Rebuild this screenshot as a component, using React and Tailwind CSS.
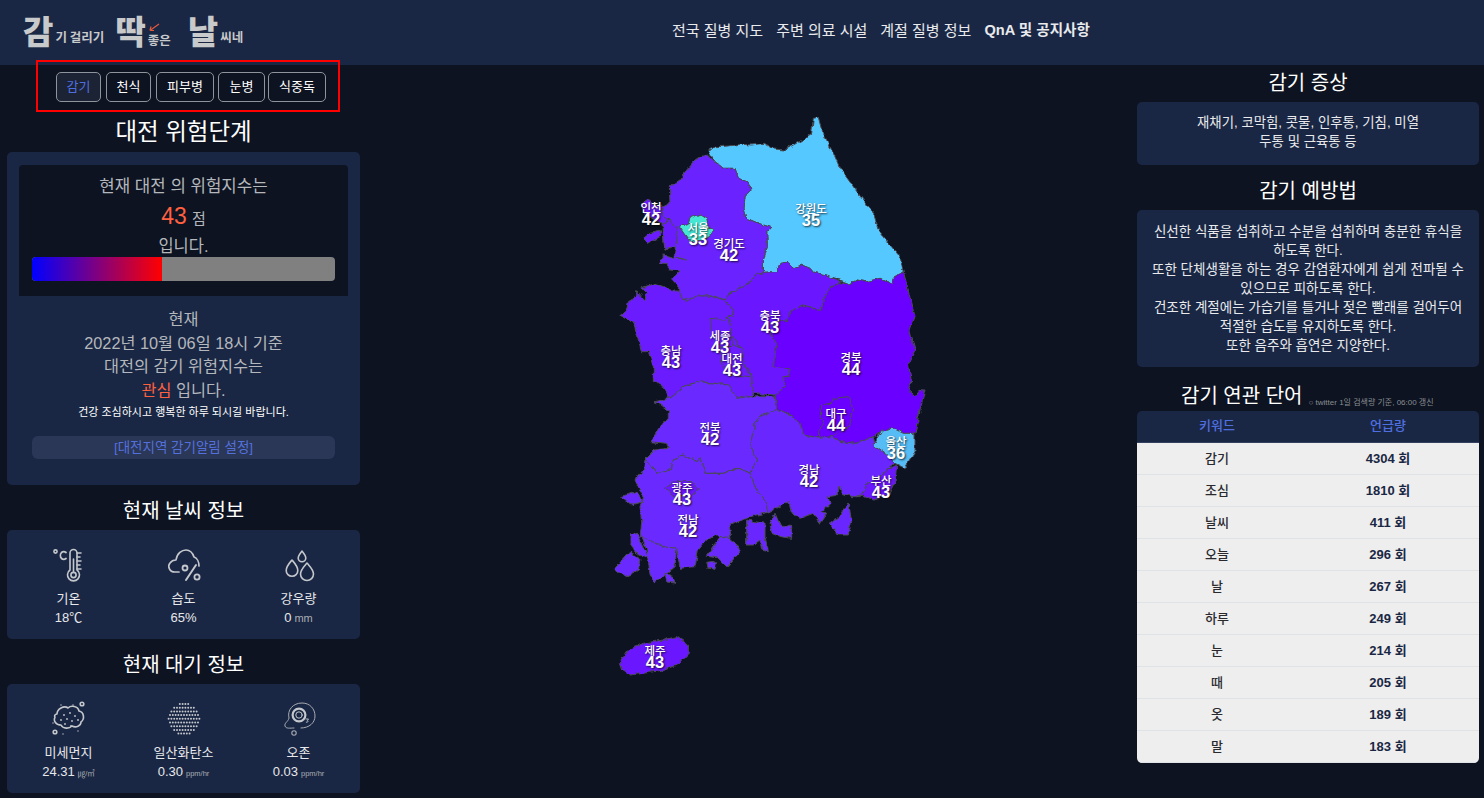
const FONT = "font-['Liberation_Sans','Noto_Sans_CJK_KR',sans-serif]";

const REGIONS = [
  { fill: "#55c8ff", pts: "325,150 350,140 385,138 420,133 455,135 490,130 520,147 550,150 580,135 610,118 635,100 640,55 655,52 665,90 685,130 705,170 720,205 760,260 800,315 825,345 840,395 870,435 900,470 910,515 880,535 875,550 840,535 800,545 770,540 750,552 720,540 680,525 640,517 630,505 605,495 580,505 560,487 540,490 530,515 490,517 490,480 502,440 500,395 512,382 475,370 440,355 432,325 435,290 455,265 440,245 415,235 405,205 370,205 345,185" },
  { fill: "#6b24ff", pts: "325,165 345,185 370,205 405,205 415,235 440,245 455,265 435,290 432,325 440,355 475,370 512,382 500,395 502,440 490,480 490,517 470,525 440,550 400,575 372,600 330,585 290,585 265,602 245,597 238,565 215,540 240,512 205,510 205,490 178,490 190,465 260,480 225,470 230,440 195,450 190,400 190,370 210,360 185,345 190,320 210,310 208,260 240,240 262,205 285,180 300,170" },
  { fill: "#6a1cff", pts: "125,310 145,297 165,315 190,320 185,345 205,360 190,370 165,360 130,340" },
  { fill: "#6a1cff", pts: "190,370 210,360 230,385 232,430 195,450 190,400" },
  { fill: "#6a1cff", pts: "130,415 150,400 185,392 180,410 145,430" },
  { fill: "#45e6d4", pts: "238,380 265,370 270,355 300,342 320,355 325,380 340,385 330,405 310,420 270,425 255,405" },
  { fill: "#6a1cff", pts: "120,565 165,550 215,570 238,570 245,597 265,602 290,585 330,585 372,600 400,630 400,645 385,650 390,700 420,740 430,790 455,830 460,880 455,890 410,895 385,855 300,845 260,855 210,895 190,860 160,845 160,800 145,755 125,755 110,700 100,665 62,645 80,630 85,605 110,590 110,572 135,600 140,575" },
  { fill: "#6a18ff", pts: "372,600 400,575 440,550 470,525 490,517 530,515 540,490 560,487 580,505 605,495 630,505 640,517 680,525 720,545 690,565 670,600 665,628 640,625 610,615 570,635 565,660 530,665 510,700 530,730 520,800 570,810 565,830 550,830 555,860 525,885 460,880 455,830 430,790 420,740 390,700 385,650 400,645 400,630" },
  { fill: "#6a1cff", pts: "330,655 372,660 385,650 390,700 400,735 370,745 345,720 335,695" },
  { fill: "#6a1cff", pts: "365,745 400,735 425,745 430,790 450,830 410,825 385,830 365,790" },
  { fill: "#6a00ff", pts: "720,545 750,552 770,540 800,545 840,535 875,550 880,535 910,515 925,570 935,610 945,650 930,690 945,750 925,790 935,850 925,870 945,887 960,868 975,870 965,910 945,1000 910,1000 880,985 850,990 820,1010 770,1030 720,1025 695,1010 660,1015 610,1005 600,970 570,945 530,925 525,885 555,860 550,830 565,830 570,810 520,800 530,730 510,700 530,665 565,660 570,635 610,615 640,625 665,628 670,600 690,565" },
  { fill: "#6a00ff", pts: "665,915 695,910 700,895 745,890 758,925 745,980 705,1005 695,1010 660,1015 655,995 675,970 660,950" },
  { fill: "#6b2aff", pts: "165,905 210,895 260,855 300,845 385,855 410,895 455,890 525,890 530,925 480,950 465,970 450,1035 470,1080 450,1120 420,1105 370,1120 315,1120 300,1075 285,1080 245,1065 220,1080 215,1105 170,1120 150,1090 135,1080 165,1050 205,1045 200,1030 150,1025 175,990 205,955 205,935 180,915" },
  { fill: "#6a28ff", pts: "530,925 570,945 600,970 610,1005 660,1015 695,1010 720,1025 770,1030 820,1010 825,1035 860,1065 885,1090 860,1110 830,1135 800,1160 780,1190 755,1190 725,1180 715,1155 715,1185 685,1190 690,1210 665,1235 680,1240 660,1270 640,1240 600,1255 570,1235 565,1205 530,1225 500,1238 500,1210 470,1170 450,1120 470,1080 450,1035 465,970 480,950" },
  { fill: "#6a28ff", pts: "690,1270 720,1250 745,1210 755,1260 745,1305 715,1305 695,1280" },
  { fill: "#6a28ff", pts: "510,1270 525,1240 540,1275 575,1280 575,1315 540,1310 515,1300" },
  { fill: "#6a28ff", pts: "440,1260 495,1270 495,1310 505,1355 485,1350 480,1320 460,1335 440,1335 440,1300" },
  { fill: "#6a2aff", pts: "135,1080 150,1090 170,1120 215,1105 220,1080 245,1065 285,1080 300,1075 315,1120 370,1120 420,1105 450,1120 470,1170 500,1210 500,1238 450,1250 430,1260 390,1275 395,1305 375,1330 350,1305 320,1320 295,1350 285,1400 240,1405 230,1345 190,1340 120,1310 125,1270 120,1220 130,1190 105,1140 130,1110" },
  { fill: "#6a2aff", pts: "125,1310 190,1340 230,1345 225,1400 190,1430 160,1445 150,1420 140,1350" },
  { fill: "#6a2aff", pts: "90,1305 110,1300 130,1345 145,1370 115,1365 90,1330" },
  { fill: "#6a2aff", pts: "45,1405 90,1355 120,1375 115,1410 75,1430" },
  { fill: "#6a2aff", pts: "195,1420 220,1430 225,1450 200,1445" },
  { fill: "#6a2aff", pts: "320,1365 360,1310 380,1310 425,1350 380,1400 350,1370" },
  { fill: "#6a2aff", pts: "320,1390 350,1385 345,1408 325,1405" },
  { fill: "#6a2aff", pts: "65,1190 110,1175 130,1205 95,1215" },
  { fill: "#6a14ff", pts: "195,1165 225,1145 275,1145 295,1170 270,1190 225,1190" },
  { fill: "#6a14ff", pts: "890,1095 885,1145 865,1185 820,1200 790,1185 770,1190 780,1185 800,1155 830,1135 860,1110" },
  { fill: "#55bcf5", pts: "820,1035 845,990 880,985 910,1000 945,1000 945,1055 915,1105 885,1090 860,1065" },
  { fill: "#6a14ff", pts: "58,1690 85,1650 130,1630 190,1620 230,1610 265,1635 265,1660 230,1695 190,1710 130,1720 90,1725 65,1710" },
];

const LABELS = [
  ["인천", 42, 651, 208], ["서울", 33, 698, 228], ["경기도", 42, 729, 244], ["강원도", 35, 811, 209],
  ["충북", 43, 770, 316], ["세종", 43, 720, 336], ["충남", 43, 671, 351], ["대전", 43, 732, 359],
  ["경북", 44, 851, 358], ["대구", 44, 836, 414], ["전북", 42, 710, 428], ["울산", 36, 896, 442],
  ["경남", 42, 809, 470], ["부산", 43, 881, 481], ["광주", 43, 682, 488], ["전남", 42, 688, 520],
  ["제주", 43, 655, 651],
];

const ROWS = [["감기", 4304], ["조심", 1810], ["날씨", 411], ["오늘", 296], ["날", 267], ["하루", 249], ["눈", 214], ["때", 205], ["옷", 189], ["말", 183]];

const Ic = ({ children }) => (
  <svg width="36" height="36" viewBox="0 0 36 36" fill="none" stroke="#c4c7cc" strokeWidth="1.6" strokeLinecap="round" strokeLinejoin="round">{children}</svg>
);

const Thermo = () => (
  <Ic>
    <circle cx="4.5" cy="4.5" r="1.6" />
    <path d="M15 5.5a3.6 3.6 0 0 0-4.5 0c-1.4 1.6-1.4 4.4 0 6a3.6 3.6 0 0 0 4.5 0" strokeWidth="1.8" />
    <path d="M19 23V6a3.5 3.5 0 0 1 7 0v17a6 6 0 1 1-7 0Z" />
    <circle cx="22.5" cy="28" r="2.6" />
    <path d="M22.5 25V12M26 6h4M26 10h3M26 14h4M26 18h3M26 22h4" />
  </Ic>
);
const CloudPct = () => (
  <Ic>
    <path d="M13 25H9C3 25 1.5 19 4 16c2-3 5-3 6-3 1-7 6-10 10-10 5 0 7 4 8 7 3 1 5 5 5 9" strokeWidth="1.7" />
    <circle cx="19" cy="21" r="2.5" strokeWidth="1.8" />
    <circle cx="31" cy="30" r="2.6" strokeWidth="1.8" />
    <path d="M30 18 20 33" strokeWidth="2" />
  </Ic>
);
const Drops = () => (
  <Ic>
    <path d="M21 4c2 2.5 3.8 4.6 3.8 7a3.8 3.8 0 0 1-7.6 0c0-2.4 1.8-4.5 3.8-7Z" />
    <path d="M11 13c3 3.5 5.8 6.5 5.8 10.5a5.8 5.8 0 0 1-11.6 0C5.2 19.5 8 16.5 11 13Z" />
    <path d="M26 16c3 3.5 6.5 6.8 6.5 11a6.5 6.5 0 0 1-13 0c0-4.2 3.5-7.5 6.5-11Z" />
  </Ic>
);
const Dust = () => (
  <Ic>
    <path d="M6 13c0-5 7-9 11-6 3-3 10-2 11 3 5 1 6 8 2 11 0 4-5 6-9 4-3 3-9 3-11-1-5 0-8-4-6-8-1-1 0-3 2-3Z" />
    <circle cx="31" cy="3" r="1.8" />
    <circle cx="4" cy="31" r="1.8" />
    {[[13, 14], [19, 12], [24, 15], [10, 19], [16, 18], [21, 20], [27, 19], [14, 23], [20, 25]].map(([x, y]) => (
      <circle key={x + "-" + y} cx={x} cy={y} r=".9" fill="#c4c7cc" stroke="none" />
    ))}
    {[[22, 4], [10, 4], [12, 33], [27, 30], [2, 22]].map(([x, y]) => (
      <circle key={x + "-" + y} cx={x} cy={y} r=".7" fill="#c4c7cc" stroke="none" />
    ))}
  </Ic>
);
const Dots = () => {
  const pts = [];
  const widths = [4, 8, 10, 11, 12, 11, 10, 8, 5];
  widths.forEach((n, r) => {
    for (let i = 0; i < n; i++) pts.push([18 + (i - (n - 1) / 2) * 2.8, 3 + r * 3.7]);
  });
  return (
    <svg width="36" height="36" viewBox="0 0 36 36">
      {pts.map(([x, y]) => <circle key={x + "-" + y} cx={x} cy={y} r="1" fill="#c4c7cc" />)}
    </svg>
  );
};
const Ozone = () => (
  <Ic>
    <path d="M13 27c-4 0-8 1-9-2-1-3 3-4 4-8C6 9 12 2 21 2c8 0 13 6 13 13 0 7-6 12-14 12" strokeWidth="1" stroke="#a7abb2" />
    <circle cx="18" cy="14" r="6.4" strokeWidth="2.2" />
    <circle cx="18" cy="14" r="3.2" strokeWidth="1" />
    <path d="M25 18h2.5l-1.200 1.500c1.200 0 1.200 2.200-1 1.700" strokeWidth=".9" />
    <circle cx="13" cy="32" r="2.200" strokeWidth="1.100" stroke="#a7abb2" />
  </Ic>
);

const Stat = ({ icon, label, value, unit }) => (
  <div className="flex flex-col items-center">
    <div className="h-[36px] flex items-center justify-center">{icon}</div>
    <div className="text-[13px] leading-[18px] mt-[7px] text-[#e6e8eb]">{label}</div>
    <div className="text-[13px] leading-[20px] text-[#e6e8eb]">
      {value}
      {unit && <span className={unit.small ? "text-[7.5px] text-[#a9adb3] ml-[3px]" : "text-[11px] text-[#a9adb3] ml-[3px]"}>{unit.text}</span>}
    </div>
  </div>
);

const Heading = ({ children, cls }) => <h2 className={"text-center text-white font-normal " + cls}>{children}</h2>;

export default function App() {
  return (
    <div className={"w-full h-[798px] bg-[#0d1321] overflow-hidden " + FONT}>
      <header className="h-[65px] bg-[#1a2744] flex items-center relative">
        <div className="flex items-end w-[600px] pl-[23px] text-[#c8c9cb] pb-[6px] font-['Noto_Sans_CJK_KR',sans-serif]">
          <span className="text-[33px] leading-[36px] font-black">감</span>
          <span className="text-[12.5px] leading-[14px] font-bold ml-[2px] mb-[4px] w-[60px]">기 걸리기</span>
          <span className="text-[33px] leading-[36px] font-black">딱</span>
          <span className="flex flex-col ml-[2px] w-[40px] mb-[1px]">
            <svg width="14" height="10" viewBox="0 0 14 10" fill="none" stroke="#e0593a" strokeWidth="1.2" className="ml-[1px] mb-[1px]"><path d="M1 8.5 10 2M1 8.5l1-4M1 8.5l4 0" /></svg>
            <span className="text-[12.5px] leading-[14px] font-bold">좋은</span>
          </span>
          <span className="text-[33px] leading-[36px] font-black">날</span>
          <span className="text-[12.5px] leading-[14px] font-bold ml-[2px] mb-[4px]">씨네</span>
        </div>
        <nav className="flex gap-[13px] text-[15px] text-[#e8eaed] ml-[72px] -mt-[3px]">
          <span>전국 질병 지도</span>
          <span>주변 의료 시설</span>
          <span>계절 질병 정보</span>
          <span className="font-bold text-[14.6px]">QnA 및 공지사항</span>
        </nav>
      </header>

      <div className="flex">
        <aside className="w-[367px] pl-[7px] pr-[7px] shrink-0">
          <div className="-mt-[5px] ml-[29px] w-[304px] h-[52px] border-2 border-[#ff0000] flex items-center pl-[18px] pt-[2px] gap-[5px] relative text-[13px]">
            <span className="h-[30px] w-[45px] rounded-[5px] border border-[#8f939b] bg-[#1c2334] text-[#4f6fe0] flex items-center justify-center">감기</span>
            <span className="h-[30px] w-[45px] rounded-[5px] border border-[#8f939b] text-white flex items-center justify-center">천식</span>
            <span className="h-[30px] w-[58px] rounded-[5px] border border-[#8f939b] text-white flex items-center justify-center">피부병</span>
            <span className="h-[30px] w-[47px] rounded-[5px] border border-[#8f939b] text-white flex items-center justify-center -ml-[1px]">눈병</span>
            <span className="h-[30px] w-[58px] rounded-[5px] border border-[#8f939b] text-white flex items-center justify-center -ml-[2px]">식중독</span>
          </div>

          <Heading cls="text-[23.5px] leading-[30px] mt-[5px]">대전 위험단계</Heading>

          <section className="mt-[5px] h-[333px] bg-[#1a2744] rounded-[5px] pt-[13px] px-[12px] text-center">
            <div className="h-[131px] bg-[#0d1321] rounded-t-[4px] px-[13px] pt-[11px] text-[#b4b7bc]">
              <div className="text-[16.8px] leading-[22px]">현재 대전 의 위험지수는</div>
              <div className="leading-[30px] mt-[3px]">
                <span className="text-[23px] text-[#ff6040]">43</span>
                <span className="text-[15px] ml-[5px]">점</span>
              </div>
              <div className="text-[16.5px] leading-[22px] mt-[1px]">입니다.</div>
              <div className="h-[24px] rounded-[4px] bg-[#808080] overflow-hidden">
                <div className="h-full w-[130px] bg-[linear-gradient(to_right,#0000ff,#ff0000)]" />
              </div>
            </div>
            <div className="text-[16.3px] leading-[23.5px] text-[#b4b7bc] mt-[12px]">
              <div>현재</div>
              <div>2022년 10월 06일 18시 기준</div>
              <div>대전의 감기 위험지수는</div>
              <div><span className="text-[#ff6040]">관심</span> 입니다.</div>
            </div>
            <div className="text-[11px] leading-[14px] text-white mt-[3px]">건강 조심하시고 행복한 하루 되시길 바랍니다.</div>
            <div className="mx-[13px] mt-[17px] h-[23px] rounded-[6px] bg-[#2a3757] text-[#5470dc] text-[13.5px] leading-[23px]">[대전지역 감기알림 설정]</div>
          </section>

          <Heading cls="text-[20px] leading-[26px] mt-[13px]">현재 날씨 정보</Heading>
          <section className="mt-[6px] h-[109px] bg-[#1a2744] rounded-[5px] grid grid-cols-3 pt-[17px] px-[4px]">
            <Stat icon={<Thermo />} label="기온" value="18℃" />
            <Stat icon={<CloudPct />} label="습도" value="65%" />
            <Stat icon={<Drops />} label="강우량" value="0" unit={{ text: "mm" }} />
          </section>

          <Heading cls="text-[20px] leading-[26px] mt-[13px]">현재 대기 정보</Heading>
          <section className="mt-[6px] h-[109px] bg-[#1a2744] rounded-[5px] grid grid-cols-3 pt-[17px] px-[4px]">
            <Stat icon={<Dust />} label="미세먼지" value="24.31" unit={{ text: "㎍/㎥", small: true }} />
            <Stat icon={<Dots />} label="일산화탄소" value="0.30" unit={{ text: "ppm/hr", small: true }} />
            <Stat icon={<Ozone />} label="오존" value="0.03" unit={{ text: "ppm/hr", small: true }} />
          </section>
        </aside>

        <main className="flex-1 min-w-0">
          <div className="relative w-[340px] h-[610px] ml-[233px] mt-[35px]">
            <svg width="340" height="610" viewBox="0 0 1020 1830" className="block">
              <defs>
                <filter id="coast" x="-5%" y="-5%" width="110%" height="110%">
                  <feTurbulence type="fractalNoise" baseFrequency="0.05" numOctaves="3" seed="4" result="n" />
                  <feDisplacementMap in="SourceGraphic" in2="n" scale="14" xChannelSelector="R" yChannelSelector="G" />
                </filter>
              </defs>
              <g stroke="#4a4a52" strokeWidth="3" strokeLinejoin="round" filter="url(#coast)">
                {REGIONS.map((r, i) => <polygon key={i} points={r.pts} fill={r.fill} />)}
              </g>
            </svg>
            {LABELS.map(([name, num, x, y]) => (
              <div
                key={name}
                className="absolute -translate-x-1/2 text-center text-white whitespace-nowrap [text-shadow:1px_1px_2px_rgba(0,0,0,0.75)]"
                style={{ left: x - 600, top: y - 105 }}
              >
                <div className="text-[11.5px] leading-[11px] font-medium">{name}</div>
                <div className="text-[16.5px] leading-[11px] font-bold">{num}</div>
              </div>
            ))}
          </div>
        </main>

        <aside className="w-[354px] shrink-0 pl-[7px] pr-[5px]">
          <Heading cls="text-[20px] leading-[28px] mt-[4px]">감기 증상</Heading>
          <section className="mt-[5px] h-[63px] bg-[#1a2744] rounded-[5px] text-center text-[13.4px] leading-[19px] text-[#e8eaed] pt-[11px]">
            <div>재채기, 코막힘, 콧물, 인후통, 기침, 미열</div>
            <div>두통 및 근육통 등</div>
          </section>
          <Heading cls="text-[20px] leading-[28px] mt-[12px]">감기 예방법</Heading>
          <section className="mt-[5px] h-[157px] bg-[#1a2744] rounded-[5px] text-center text-[13.5px] leading-[19px] text-[#e8eaed] pt-[12px]">
            <div>신선한 식품을 섭취하고 수분을 섭취하며 충분한 휴식을</div>
            <div>하도록 한다.</div>
            <div>또한 단체생활을 하는 경우 감염환자에게 쉽게 전파될 수</div>
            <div>있으므로 피하도록 한다.</div>
            <div>건조한 계절에는 가습기를 틀거나 젖은 빨래를 걸어두어</div>
            <div>적절한 습도를 유지하도록 한다.</div>
            <div>또한 음주와 흡연은 지양한다.</div>
          </section>
          <div className="flex items-end mt-[15px] h-[28px] pl-[44px]">
            <span className="text-[20px] leading-[28px] text-white">감기 연관 단어</span>
            <span className="text-[8px] leading-[12px] text-[#8a8d92] ml-[6px] mb-[1px] whitespace-nowrap">○ twitter 1일 검색량 기준, 06:00 갱신</span>
          </div>
          <section className="mt-[1px] rounded-[5px] overflow-hidden">
            <div className="h-[32px] bg-[#1a2744] grid grid-cols-[160px_1fr] text-center text-[13px] leading-[30px] font-medium text-[#4f6fe0] border-b border-[#33415f]">
              <div>키워드</div>
              <div>언급량</div>
            </div>
            {ROWS.map(([word, count]) => (
              <div key={word} className="h-[32px] bg-[#eeeeee] grid grid-cols-[160px_1fr] text-center text-[13px] leading-[31px] text-[#1a2744] border-b border-[#dfe3e6]">
                <div className="font-medium text-[#2a2a2e]">{word}</div>
                <div className="font-bold">{count} 회</div>
              </div>
            ))}
          </section>
        </aside>
      </div>
    </div>
  );
}
